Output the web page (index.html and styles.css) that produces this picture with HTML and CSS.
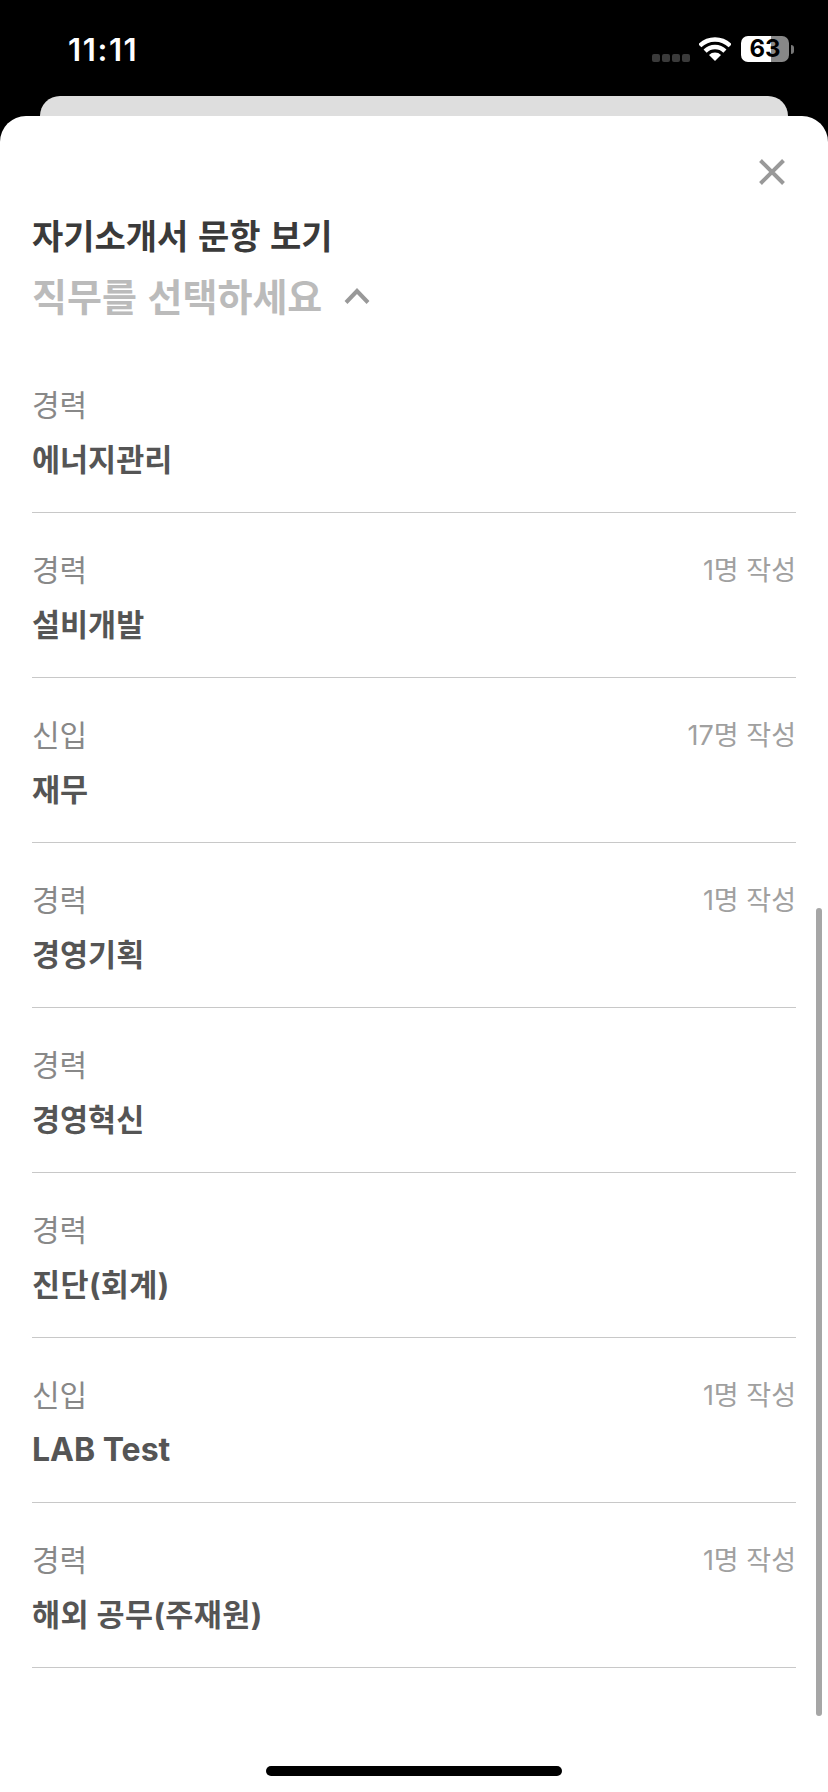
FILE: index.html
```html
<!DOCTYPE html>
<html lang="ko">
<head>
<meta charset="utf-8">
<title>자기소개서 문항 보기</title>
<link rel="stylesheet" href="styles.css">
</head>
<body>
<div class="screen">
  <header class="status">
    <span class="time">11:11</span>
    <div class="indicators">
      <div class="dots"><i></i><i></i><i></i><i></i></div>
      <svg class="wifi" viewBox="0 0 32 24" width="32" height="24">
        <path d="M16 24 L10 18 A8.5 8.5 0 0 1 22 18 Z" fill="#fff"/>
        <path d="M6.1 14.1 A14 14 0 0 1 25.9 14.1 M0.8 8.8 A21.5 21.5 0 0 1 31.2 8.8" fill="none" stroke="#fff" stroke-width="4.4"/>
      </svg>
      <div class="battery"><span class="level">63</span></div>
      <i class="nub"></i>
    </div>
  </header>
  <div class="backcard"></div>
  <main class="sheet">
    <div class="close-row">
      <svg class="close" viewBox="0 0 26 26" width="26" height="26"><path d="M1.5 1.5 L24.5 24.5 M24.5 1.5 L1.5 24.5" fill="none" stroke="#999" stroke-width="4"/></svg>
    </div>
    <h1 class="title">자기소개서 문항 보기</h1>
    <div class="picker">
      <span class="picker-text">직무를 선택하세요</span>
      <svg class="chevron" viewBox="0 0 26 16" width="26" height="16"><path d="M2 14.5 L13 3 L24 14.5" fill="none" stroke="#999" stroke-width="4"/></svg>
    </div>
    <ul class="list">
      <li class="row"><div class="top"><span class="kind">경력</span></div><div class="job">에너지관리</div></li>
      <li class="row"><div class="top"><span class="kind">경력</span><span class="count">1명 작성</span></div><div class="job">설비개발</div></li>
      <li class="row"><div class="top"><span class="kind">신입</span><span class="count">17명 작성</span></div><div class="job">재무</div></li>
      <li class="row"><div class="top"><span class="kind">경력</span><span class="count">1명 작성</span></div><div class="job">경영기획</div></li>
      <li class="row"><div class="top"><span class="kind">경력</span></div><div class="job">경영혁신</div></li>
      <li class="row"><div class="top"><span class="kind">경력</span></div><div class="job job-paren">진단(회계)</div></li>
      <li class="row"><div class="top"><span class="kind">신입</span><span class="count">1명 작성</span></div><div class="job job-latin">LAB Test</div></li>
      <li class="row"><div class="top"><span class="kind">경력</span><span class="count">1명 작성</span></div><div class="job job-paren">해외 공무(주재원)</div></li>
    </ul>
    <div class="scrollbar"></div>
    <div class="home"></div>
  </main>
</div>
</body>
</html>
```
FILE: styles.css
```css
* { box-sizing: border-box; }
html, body { margin: 0; padding: 0; }
body { background: #000; font-family: Inter, "Noto Sans CJK KR", sans-serif; }
.screen { width: 828px; height: 1792px; overflow: hidden; display: flex; flex-direction: column; }
.status { height: 96px; display: flex; justify-content: space-between; align-items: flex-start; padding: 30px 34px 0 68px; flex: none; }
.time { color: #fff; font: 600 31px/40px Inter, sans-serif; letter-spacing: 1.6px; }
.indicators { display: flex; align-items: center; height: 40px; margin-top: -1px; }
.dots { display: flex; gap: 2px; margin-top: 17px; margin-right: 9px; }
.dots i { width: 8px; height: 8px; border-radius: 2px; background: #3a3a3a; display: block; }
.wifi { margin-right: 10px; margin-top: -1px; }
.battery { width: 48px; height: 26px; border-radius: 7px; background: linear-gradient(to right, #fff 0 30px, #888 30px); text-align: center; }
.level { color: #000; font: 700 24px/26px Inter, sans-serif; display: block; }
.nub { width: 3px; height: 9px; background: #777; border-radius: 0 3px 3px 0; margin-left: 2px; display: block; }
.backcard { height: 20px; margin: 0 40px; background: #dedede; border-radius: 20px 20px 0 0; flex: none; }
.sheet { position: relative; flex: 1; background: #fff; border-radius: 26px 26px 0 0; padding: 0 32px; }
.close-row { display: flex; justify-content: flex-end; padding: 43px 11px 0 0; height: 93px; }
.title { margin: 0; font: 700 34px/52px "Noto Sans CJK KR", sans-serif; color: #3a3a3a; }
.picker { display: flex; align-items: center; gap: 22px; height: 68px; }
.picker-text { font: 700 38px/68px "Noto Sans CJK KR", sans-serif; color: #bbb; }
.chevron { margin-top: 1px; }
.list { list-style: none; margin: 19px 0 0; padding: 0; }
.row { height: 165px; border-bottom: 1px solid #c8c8c8; padding-top: 27px; }
.top { display: flex; justify-content: space-between; height: 58px; }
.kind { font: 400 30px/56px "Noto Sans CJK KR", sans-serif; color: #888; }
.count { font: 400 27px/62px Inter, "Noto Sans CJK KR", sans-serif; color: #a0a0a0; }
.job { font: 700 30.5px/54px Inter, "Noto Sans CJK KR", sans-serif; color: #555; }
.job-latin { font-size: 32px; }
.job-paren { letter-spacing: 0.4px; }
.scrollbar { position: absolute; right: 6px; top: 792px; width: 6px; height: 808px; border-radius: 3px; background: #a6a6a6; }
.home { position: absolute; left: 266px; bottom: 16px; width: 296px; height: 10px; border-radius: 5px; background: #000; }
```
